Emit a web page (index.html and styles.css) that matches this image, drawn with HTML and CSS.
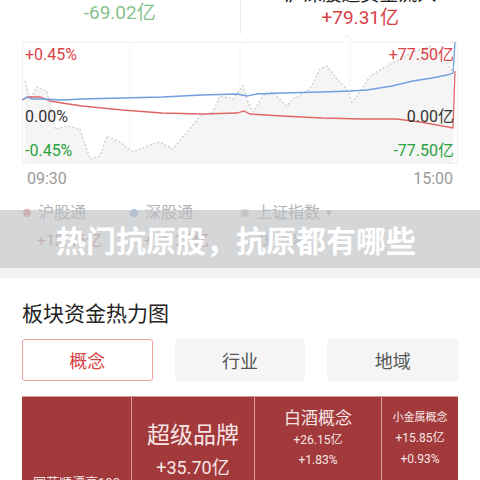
FILE: index.html
```html
<!DOCTYPE html>
<html lang="zh-CN">
<head>
    <meta charset="UTF-8">
    <meta name="viewport" content="width=device-width, initial-scale=1.0">
    <title>热门抗原股，抗原都有哪些</title>
    <link rel="stylesheet" href="styles.css">
</head>
<body>
    <div class="stats">
        <div class="head">
            <div class="head-col left">
                <div class="head-label">北向资金净流入</div>
                <div class="head-value green-light">-69.02亿</div>
            </div>
            <div class="head-col right">
                <div class="head-label">沪深股通资金流入</div>
                <div class="head-value red">+79.31亿</div>
            </div>
        </div>

        <div class="chart">
            <svg class="chart-svg" width="436" height="122" viewBox="0 0 436 122">
                <rect x="0.5" y="0.5" width="435" height="121" fill="#fff" stroke="#f0f0f0"/>
                <path d="M318 0.5 L325 -7 L332 0.5" fill="#fff" stroke="#ececec"/>
                <line x1="108" y1="1" x2="108" y2="121" stroke="#f4f4f4"/>
                <line x1="218" y1="1" x2="218" y2="121" stroke="#f4f4f4"/>
                <line x1="328" y1="1" x2="328" y2="121" stroke="#f4f4f4"/>
                <polygon fill="#f5f5f5" points="3,39 8,57 15,45 25,49 33,87 45,84 58,87 68,117 78,114 85,94 91,97 98,100 111,110 125,104 138,100 151,107 165,90 178,74 191,70 198,54 211,57 221,44 226,60 231,70 241,54 251,50 265,64 271,57 288,47 298,27 305,24 315,37 325,47 330,60 338,50 348,34 365,24 378,17 391,10 408,4 421,17 431,29 431,121 3,121"/>
                <polyline fill="none" stroke="#cdcdcd" stroke-width="1.3" stroke-dasharray="2 2" points="3,39 8,57 15,45 25,49 33,87 45,84 58,87 68,117 78,114 85,94 91,97 98,100 111,110 125,104 138,100 151,107 165,90 178,74 191,70 198,54 211,57 221,44 226,60 231,70 241,54 251,50 265,64 271,57 288,47 298,27 305,24 315,37 325,47 330,60 338,50 348,34 365,24 378,17 391,10 408,4 421,17 431,29"/>
                <polyline fill="none" stroke="#e06666" stroke-width="1.3" points="0,58 6,55 18,55 28,59 40,61 60,64 100,68 140,71 180,72 215,71 222,69 228,72 260,74 300,76 340,77 375,77 398,80 415,83 431,86 433,29"/>
                <polyline fill="none" stroke="#6f9fe0" stroke-width="1.3" points="0,58 5,55 10,57 20,57 40,58 60,57 100,56 140,55 180,53 215,52 225,54 235,52 260,51 300,50 328,49 345,48 370,44 391,39 410,36 425,33 431,31 433,0"/>
            </svg>
            <div class="axis">
                <div class="axis-label red top">+0.45%</div>
                <div class="axis-label dark mid">0.00%</div>
                <div class="axis-label green low">-0.45%</div>
            </div>
            <div class="axis axis-right">
                <div class="axis-label red top">+77.50亿</div>
                <div class="axis-label dark mid">0.00亿</div>
                <div class="axis-label green low">-77.50亿</div>
            </div>
        </div>

        <div class="times">
            <span>09:30</span>
            <span>15:00</span>
        </div>

        <div class="legend">
            <div class="legend-item"><span class="dot dot-red"></span>沪股通</div>
            <div class="legend-item"><span class="dot dot-blue"></span>深股通</div>
            <div class="legend-item"><span class="dot dot-gray"></span>上证指数<span class="caret">▾</span></div>
        </div>
        <div class="legend-values">
            <div class="legend-value pink">+12.46亿</div>
            <div class="legend-value pink">+15.27亿</div>
            <div class="legend-value grey">-0.13%</div>
        </div>

        <div class="banner">热门抗原股，抗原都有哪些</div>
    </div>

    <div class="divider"></div>

    <div class="heat">
        <h2 class="heat-title">板块资金热力图</h2>
        <div class="tabs">
            <div class="tab active">概念</div>
            <div class="tab">行业</div>
            <div class="tab">地域</div>
        </div>
        <div class="heatmap">
            <div class="cell cell-1">
                <div class="cell-name">同花顺漂亮100</div>
            </div>
            <div class="cell cell-2">
                <div class="cell-name">超级品牌</div>
                <div class="cell-num">+35.70亿</div>
            </div>
            <div class="cell cell-3">
                <div class="cell-name">白酒概念</div>
                <div class="cell-num">+26.15亿</div>
                <div class="cell-num">+1.83%</div>
            </div>
            <div class="cell cell-4">
                <div class="cell-name">小金属概念</div>
                <div class="cell-num">+15.85亿</div>
                <div class="cell-num">+0.93%</div>
            </div>
        </div>
    </div>
</body>
</html>
```

FILE: styles.css
```css
body {
    margin: 0;
    background: #fff;
    font-family: Roboto, "Noto Sans CJK SC", sans-serif;
    color: #222;
    overflow: hidden;
}
.stats {
    position: relative;
    display: flow-root;
    padding: 0 22px 17px;
}
.head {
    display: flex;
    align-items: flex-start;
    margin: -16px -22px 0;
}
.head-col {
    flex: 1;
    display: flex;
    flex-direction: column;
    align-items: center;
}
.head-col.left {
    margin-top: -5px;
}
.head-col.right {
    border-left: 1px solid #eeeeee;
    padding-bottom: 4px;
}
.head-label {
    font-size: 19px;
    line-height: 22px;
    color: #222;
}
.head-col.left .head-label {
    color: #fff;
}
.head-value {
    font-size: 19px;
    line-height: 24px;
}
.green-light {
    color: #86c28c;
}
.red {
    color: #dc4148;
}
.green {
    color: #2aa340;
}
.dark {
    color: #333;
}
.chart {
    position: relative;
    height: 122px;
    margin-top: 8px;
    display: flex;
    justify-content: space-between;
}
.chart-svg {
    position: absolute;
    left: 0;
    top: 0;
    overflow: visible;
}
.axis {
    position: relative;
    display: flex;
    flex-direction: column;
    padding-left: 3px;
}
.axis-right {
    align-items: flex-end;
    padding-left: 0;
    padding-right: 4px;
}
.axis-label {
    font-size: 16px;
    line-height: 20px;
}
.axis-label.top {
    margin-top: 3px;
}
.axis-label.mid {
    margin-top: 42px;
}
.axis-label.low {
    margin-top: 14px;
}
.times {
    display: flex;
    justify-content: space-between;
    padding: 0 5px;
    margin-top: 5px;
    font-size: 16px;
    line-height: 20px;
    color: #9a9a9a;
}
.legend, .legend-values {
    display: flex;
    font-size: 16px;
    line-height: 20px;
}
.legend {
    margin-top: 14px;
    color: #b3b3b3;
}
.legend-item {
    display: flex;
    align-items: center;
}
.legend-item:nth-child(1), .legend-value:nth-child(1) {
    width: 107px;
}
.legend-item:nth-child(2), .legend-value:nth-child(2) {
    width: 111px;
}
.dot {
    width: 8px;
    height: 8px;
    border-radius: 50%;
    margin: 0 7px 0 1px;
}
.dot-red {
    background: #e9a2a2;
}
.dot-blue {
    background: #a8c3ea;
}
.dot-gray {
    background: #d3d3d3;
}
.caret {
    font-size: 11px;
    margin-left: 6px;
    color: #bbb;
}
.legend-values {
    margin-top: 8px;
    padding-left: 15px;
}
.legend-value.pink {
    color: #cf9a9a;
}
.legend-value.grey {
    color: #b5b5b5;
}
.banner {
    position: absolute;
    left: 0;
    right: 0;
    top: 210px;
    height: 58px;
    display: flex;
    align-items: center;
    justify-content: center;
    background: rgba(188, 191, 194, 0.64);
    color: #fff;
    font-family: "Noto Sans CJK SC", sans-serif;
    font-weight: 700;
    font-size: 30px;
    padding-right: 8px;
}
.divider {
    height: 10px;
    background: #f3f3f3;
}
.heat {
    padding: 21px 22px 0;
}
.heat-title {
    margin: 0;
    font-family: "Noto Sans CJK SC", sans-serif;
    font-weight: 400;
    font-size: 21px;
    line-height: 26px;
    color: #222;
}
.tabs {
    display: flex;
    gap: 22px;
    margin-top: 14px;
}
.tab {
    flex: 1;
    height: 42px;
    display: flex;
    align-items: center;
    justify-content: center;
    background: #f5f5f5;
    border: 1px solid #f5f5f5;
    border-radius: 3px;
    font-family: "Noto Sans CJK SC", sans-serif;
    font-size: 18px;
    color: #555;
    box-sizing: border-box;
}
.tab.active {
    background: #fff;
    border-color: #eaa4a4;
    color: #d8413f;
}
.heatmap {
    display: flex;
    align-items: flex-start;
    margin-top: 15px;
    border-top: 1px solid #d99a9a;
}
.cell {
    background: #a23a3c;
    color: #f7e5e5;
    display: flex;
    flex-direction: column;
    align-items: center;
    justify-content: center;
    border-right: 1px solid #d49c9c;
    box-sizing: border-box;
    text-align: center;
}
.cell-1 {
    width: 110px;
    height: 168px;
}
.cell-2 {
    width: 123px;
    height: 102px;
}
.cell-3 {
    width: 127px;
    height: 92px;
    justify-content: flex-start;
    padding-top: 11px;
}
.cell-4 {
    width: 76px;
    height: 92px;
    border-right: none;
    justify-content: flex-start;
    padding-top: 14px;
}
.cell-1 .cell-name {
    font-size: 13px;
}
.cell-2 .cell-name {
    font-size: 23px;
    line-height: 30px;
    margin-top: 4px;
}
.cell-2 .cell-num {
    font-size: 18px;
    line-height: 24px;
    margin-top: 5px;
}
.cell-3 .cell-name {
    font-size: 17px;
    line-height: 20px;
}
.cell-3 .cell-num {
    font-size: 12px;
    line-height: 16px;
    margin-top: 4px;
}
.cell-4 .cell-name {
    font-size: 11px;
    line-height: 14px;
}
.cell-4 .cell-num {
    font-size: 12px;
    line-height: 16px;
    margin-top: 5px;
}
```
